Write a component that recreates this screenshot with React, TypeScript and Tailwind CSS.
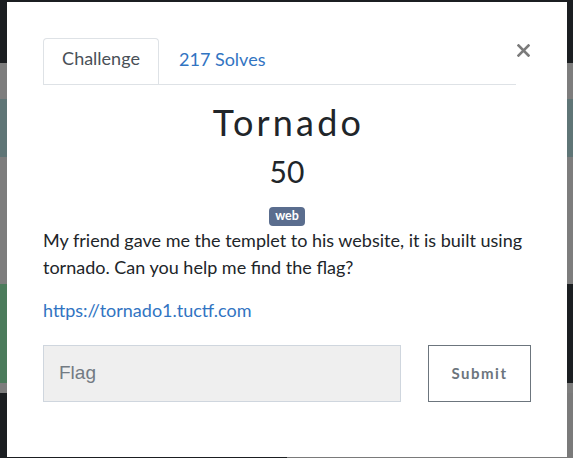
import React from "react";

export default function App() {
  return (
    <div className="relative w-[573px] h-[458px] overflow-hidden bg-[#1b1e21]" style={{ fontFamily: "Lato, 'Noto Sans', sans-serif" }}>
      {/* page behind overlay */}
      <div className="flex flex-col w-full h-full">
        <div className="h-[63px] bg-[#1b1e21]" />
        <div className="h-[36px] bg-[#7d7d7d]" />
        <div className="h-[58px] bg-[#5f7576]" />
        <div className="h-[127px] bg-[#7d7d7d]" />
        <div className="h-[99px] flex">
          <div className="w-1/2 bg-[#4b7b5b]" />
          <div className="w-1/2 bg-[#1b1e21]" />
        </div>
        <div className="h-[10px] bg-[#7d7d7d]" />
        <div className="flex-1 flex">
          <div className="w-1/2 bg-[#1b1e21]" />
          <div className="w-1/2 bg-[#7a7a7a]" />
        </div>
      </div>

      {/* modal */}
      <div className="absolute left-[7px] top-[2px] w-[560px] h-[455px] bg-white">
        <div className="relative pl-[36px] pt-[36px]">
          <svg className="absolute left-[510px] top-[42px]" width="13" height="13" viewBox="0 0 13 13">
            <path d="M1.5 1.5 L11.5 11.5 M11.5 1.5 L1.5 11.5" stroke="#7b7b7b" strokeWidth="2.6" strokeLinecap="square" />
          </svg>

          {/* tabs */}
          <div className="flex w-[473px] border-b border-[#dee2e6] text-[18px]">
            <div className="h-[46px] w-[116px] flex items-center justify-center pb-[6px] border border-b-0 border-[#dee2e6] rounded-t-[4px] text-[#495057] bg-white">
              Challenge
            </div>
            <div className="h-[46px] flex items-center pb-[3px] pl-[20px] text-[#3174c2]">217 Solves</div>
          </div>

          {/* content */}
          <div className="w-[488px] flex flex-col">
            <div className="mt-[16px] text-center text-[36px] leading-[1.2] text-[#212529] tracking-[3.2px] pl-[3px]">Tornado</div>
            <div className="mt-[9px] text-center text-[30px] leading-[1.2] text-[#212529]">50</div>
            <div className="mt-[18px] flex justify-center">
              <span className="h-[19px] w-[36px] flex items-center justify-center rounded-[4px] bg-[#5a6d8e] text-white text-[12.5px] font-bold leading-none">web</span>
            </div>
            <p className="mt-[1px] text-[18px] leading-[27px] text-[#212529]">
              My friend gave me the templet to his website, it is built using tornado. Can you help me find the flag?
            </p>
            <div className="mt-[16px] text-[18px] leading-[27px] text-[#3174c2]">https://tornado1.tuctf.com</div>
            <div className="mt-[21px] flex items-center justify-between">
              <div className="w-[358px] h-[57px] bg-[#efefef] border border-[#cfd6de] flex items-center pl-[15px] text-[19px] text-[#737b83]" style={{ fontFamily: "'Liberation Sans', Arial, sans-serif" }}>
                Flag
              </div>
              <div className="w-[103px] h-[57px] border border-[#6c757d] flex items-center justify-center pb-[1px] text-[15px] font-bold tracking-[1.5px] text-[#6c757d]">
                Submit
              </div>
            </div>
          </div>
        </div>
      </div>
    </div>
  );
}
